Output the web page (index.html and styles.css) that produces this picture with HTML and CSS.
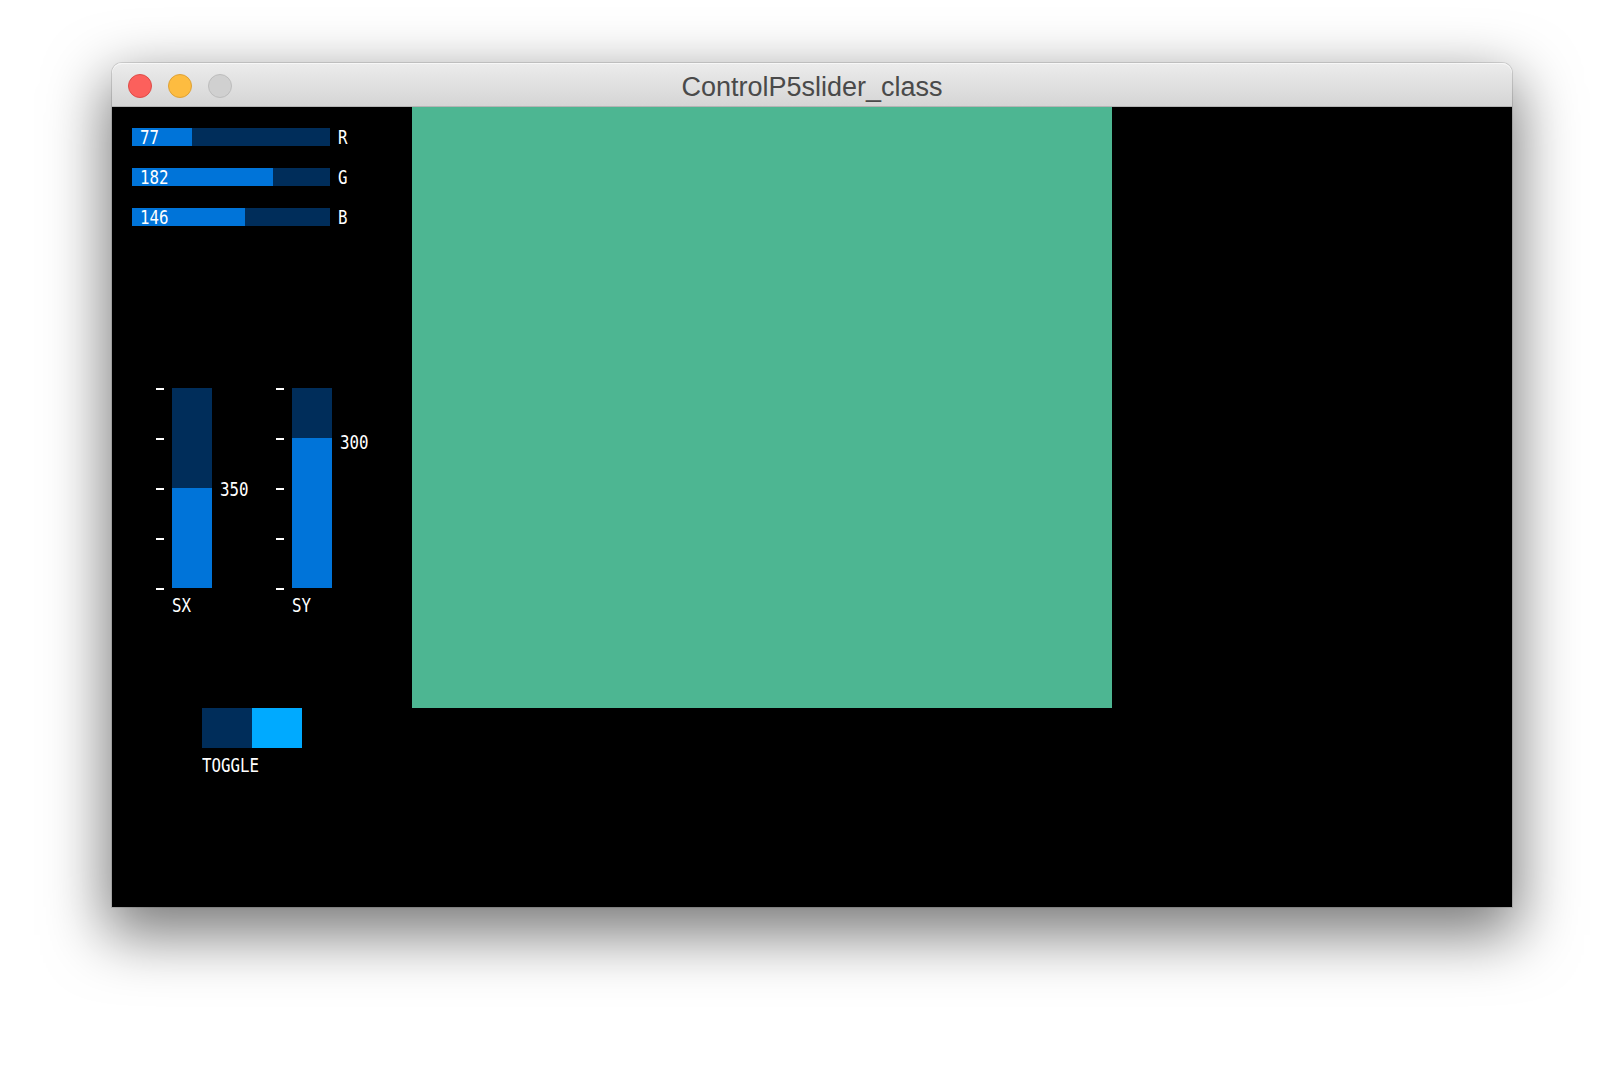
FILE: index.html
```html
<!DOCTYPE html>
<html>
<head>
<meta charset="utf-8">
<title>ControlP5slider_class</title>
<link rel="stylesheet" href="styles.css">
</head>
<body>
<div class="window">
  <div class="titlebar">
    <div class="lights">
      <span class="light red"></span>
      <span class="light yellow"></span>
      <span class="light gray"></span>
    </div>
    <div class="title">ControlP5slider_class</div>
  </div>
  <div class="canvas">
    <div class="controls">
      <div class="hsliders">
        <div class="hrow">
          <div class="hbar"><div class="hfill" style="width:59.8px"></div><span class="px hval">77</span></div>
          <span class="px hlabel">R</span>
        </div>
        <div class="hrow">
          <div class="hbar"><div class="hfill" style="width:141.3px"></div><span class="px hval">182</span></div>
          <span class="px hlabel">G</span>
        </div>
        <div class="hrow">
          <div class="hbar"><div class="hfill" style="width:113.4px"></div><span class="px hval">146</span></div>
          <span class="px hlabel">B</span>
        </div>
      </div>
      <div class="vsliders">
        <div class="vgroup">
          <div class="vrow">
            <div class="ticks"><i></i><i></i><i></i><i></i><i></i></div>
            <div class="vbar"><div class="vfill" style="height:100px"></div></div>
            <span class="px vval" style="margin-top:92px">350</span>
          </div>
          <span class="px vlabel">SX</span>
        </div>
        <div class="vgroup">
          <div class="vrow">
            <div class="ticks"><i></i><i></i><i></i><i></i><i></i></div>
            <div class="vbar"><div class="vfill" style="height:150px"></div></div>
            <span class="px vval" style="margin-top:45px">300</span>
          </div>
          <span class="px vlabel">SY</span>
        </div>
      </div>
      <div class="toggle-wrap">
        <div class="toggle"><span class="toff"></span><span class="ton"></span></div>
        <span class="px tlabel">TOGGLE</span>
      </div>
    </div>
    <div class="shape" style="background:rgb(77,182,146)"></div>
  </div>
</div>
</body>
</html>
```
FILE: styles.css
```css
html, body {
  margin: 0;
  padding: 0;
  background: #ffffff;
}
body {
  width: 1624px;
  height: 1068px;
  overflow: hidden;
  font-family: "Liberation Sans", Arial, sans-serif;
}
.window {
  margin: 63px 0 0 112px;
  width: 1400px;
  display: flex;
  flex-direction: column;
  border-radius: 10px 10px 0 0;
  box-shadow: 0 22px 60px 6px rgba(0, 0, 0, 0.52), 0 0 0 1px rgba(0, 0, 0, 0.12);
}
.titlebar {
  height: 43px;
  border-bottom: 1px solid #b4b4b4;
  background: linear-gradient(#ececec, #d5d5d5);
  border-radius: 10px 10px 0 0;
  display: flex;
  align-items: center;
  position: relative;
  box-shadow: inset 0 1px 0 #f7f7f7;
}
.lights {
  display: flex;
  gap: 16px;
  padding-left: 16px;
  margin-top: 2px;
}
.light {
  width: 24px;
  height: 24px;
  border-radius: 50%;
  box-sizing: border-box;
}
.red { background: #fc605c; border: 1px solid #de4c48; }
.yellow { background: #fdbc40; border: 1px solid #dea236; }
.gray { background: #d0d0d0; border: 1px solid #bdbdbd; }
.title {
  position: absolute;
  left: 0;
  right: 0;
  top: 0;
  bottom: 0;
  display: flex;
  align-items: center;
  justify-content: center;
  padding-top: 5px;
  font-size: 27px;
  color: #4a4a4a;
  pointer-events: none;
}
.canvas {
  height: 800px;
  background: #000;
  display: flex;
  align-items: flex-start;
}
.controls {
  width: 280px;
  padding: 21px 0 0 20px;
  display: flex;
  flex-direction: column;
  align-items: flex-start;
}
.px {
  display: inline-block;
  font-family: "DejaVu Sans Mono", "Liberation Mono", monospace;
  font-size: 19px;
  line-height: 18px;
  color: #fff;
  white-space: nowrap;
  transform: scaleX(0.83);
  transform-origin: left center;
}
.hsliders {
  display: flex;
  flex-direction: column;
  gap: 22px;
}
.hrow {
  display: flex;
  align-items: center;
  gap: 8px;
}
.hbar {
  position: relative;
  width: 198px;
  height: 18px;
  background: #002d5a;
}
.hfill {
  height: 100%;
  background: #0074d9;
}
.hval {
  position: absolute;
  left: 8px;
  top: 0;
}
.vsliders {
  margin: 162px 0 0 24px;
  display: flex;
}
.vgroup {
  width: 120px;
  display: flex;
  flex-direction: column;
  align-items: flex-start;
}
.vrow {
  display: flex;
  align-items: flex-start;
}
.ticks {
  width: 8px;
  height: 202px;
  display: flex;
  flex-direction: column;
  justify-content: space-between;
}
.ticks i {
  display: block;
  height: 2px;
  background: #fff;
}
.vbar {
  margin-left: 8px;
  width: 40px;
  height: 200px;
  background: #002d5a;
  display: flex;
  flex-direction: column;
  justify-content: flex-end;
}
.vfill {
  background: #0074d9;
}
.vval {
  margin-left: 8px;
}
.vlabel {
  margin: 6px 0 0 16px;
}
.toggle-wrap {
  margin: 94px 0 0 70px;
  display: flex;
  flex-direction: column;
  align-items: flex-start;
  gap: 8px;
}
.toggle {
  display: flex;
  width: 100px;
  height: 40px;
}
.toff { flex: 1; background: #002d5a; }
.ton { flex: 1; background: #00aaff; }
.shape {
  width: 700px;
  height: 601px;
}
```
